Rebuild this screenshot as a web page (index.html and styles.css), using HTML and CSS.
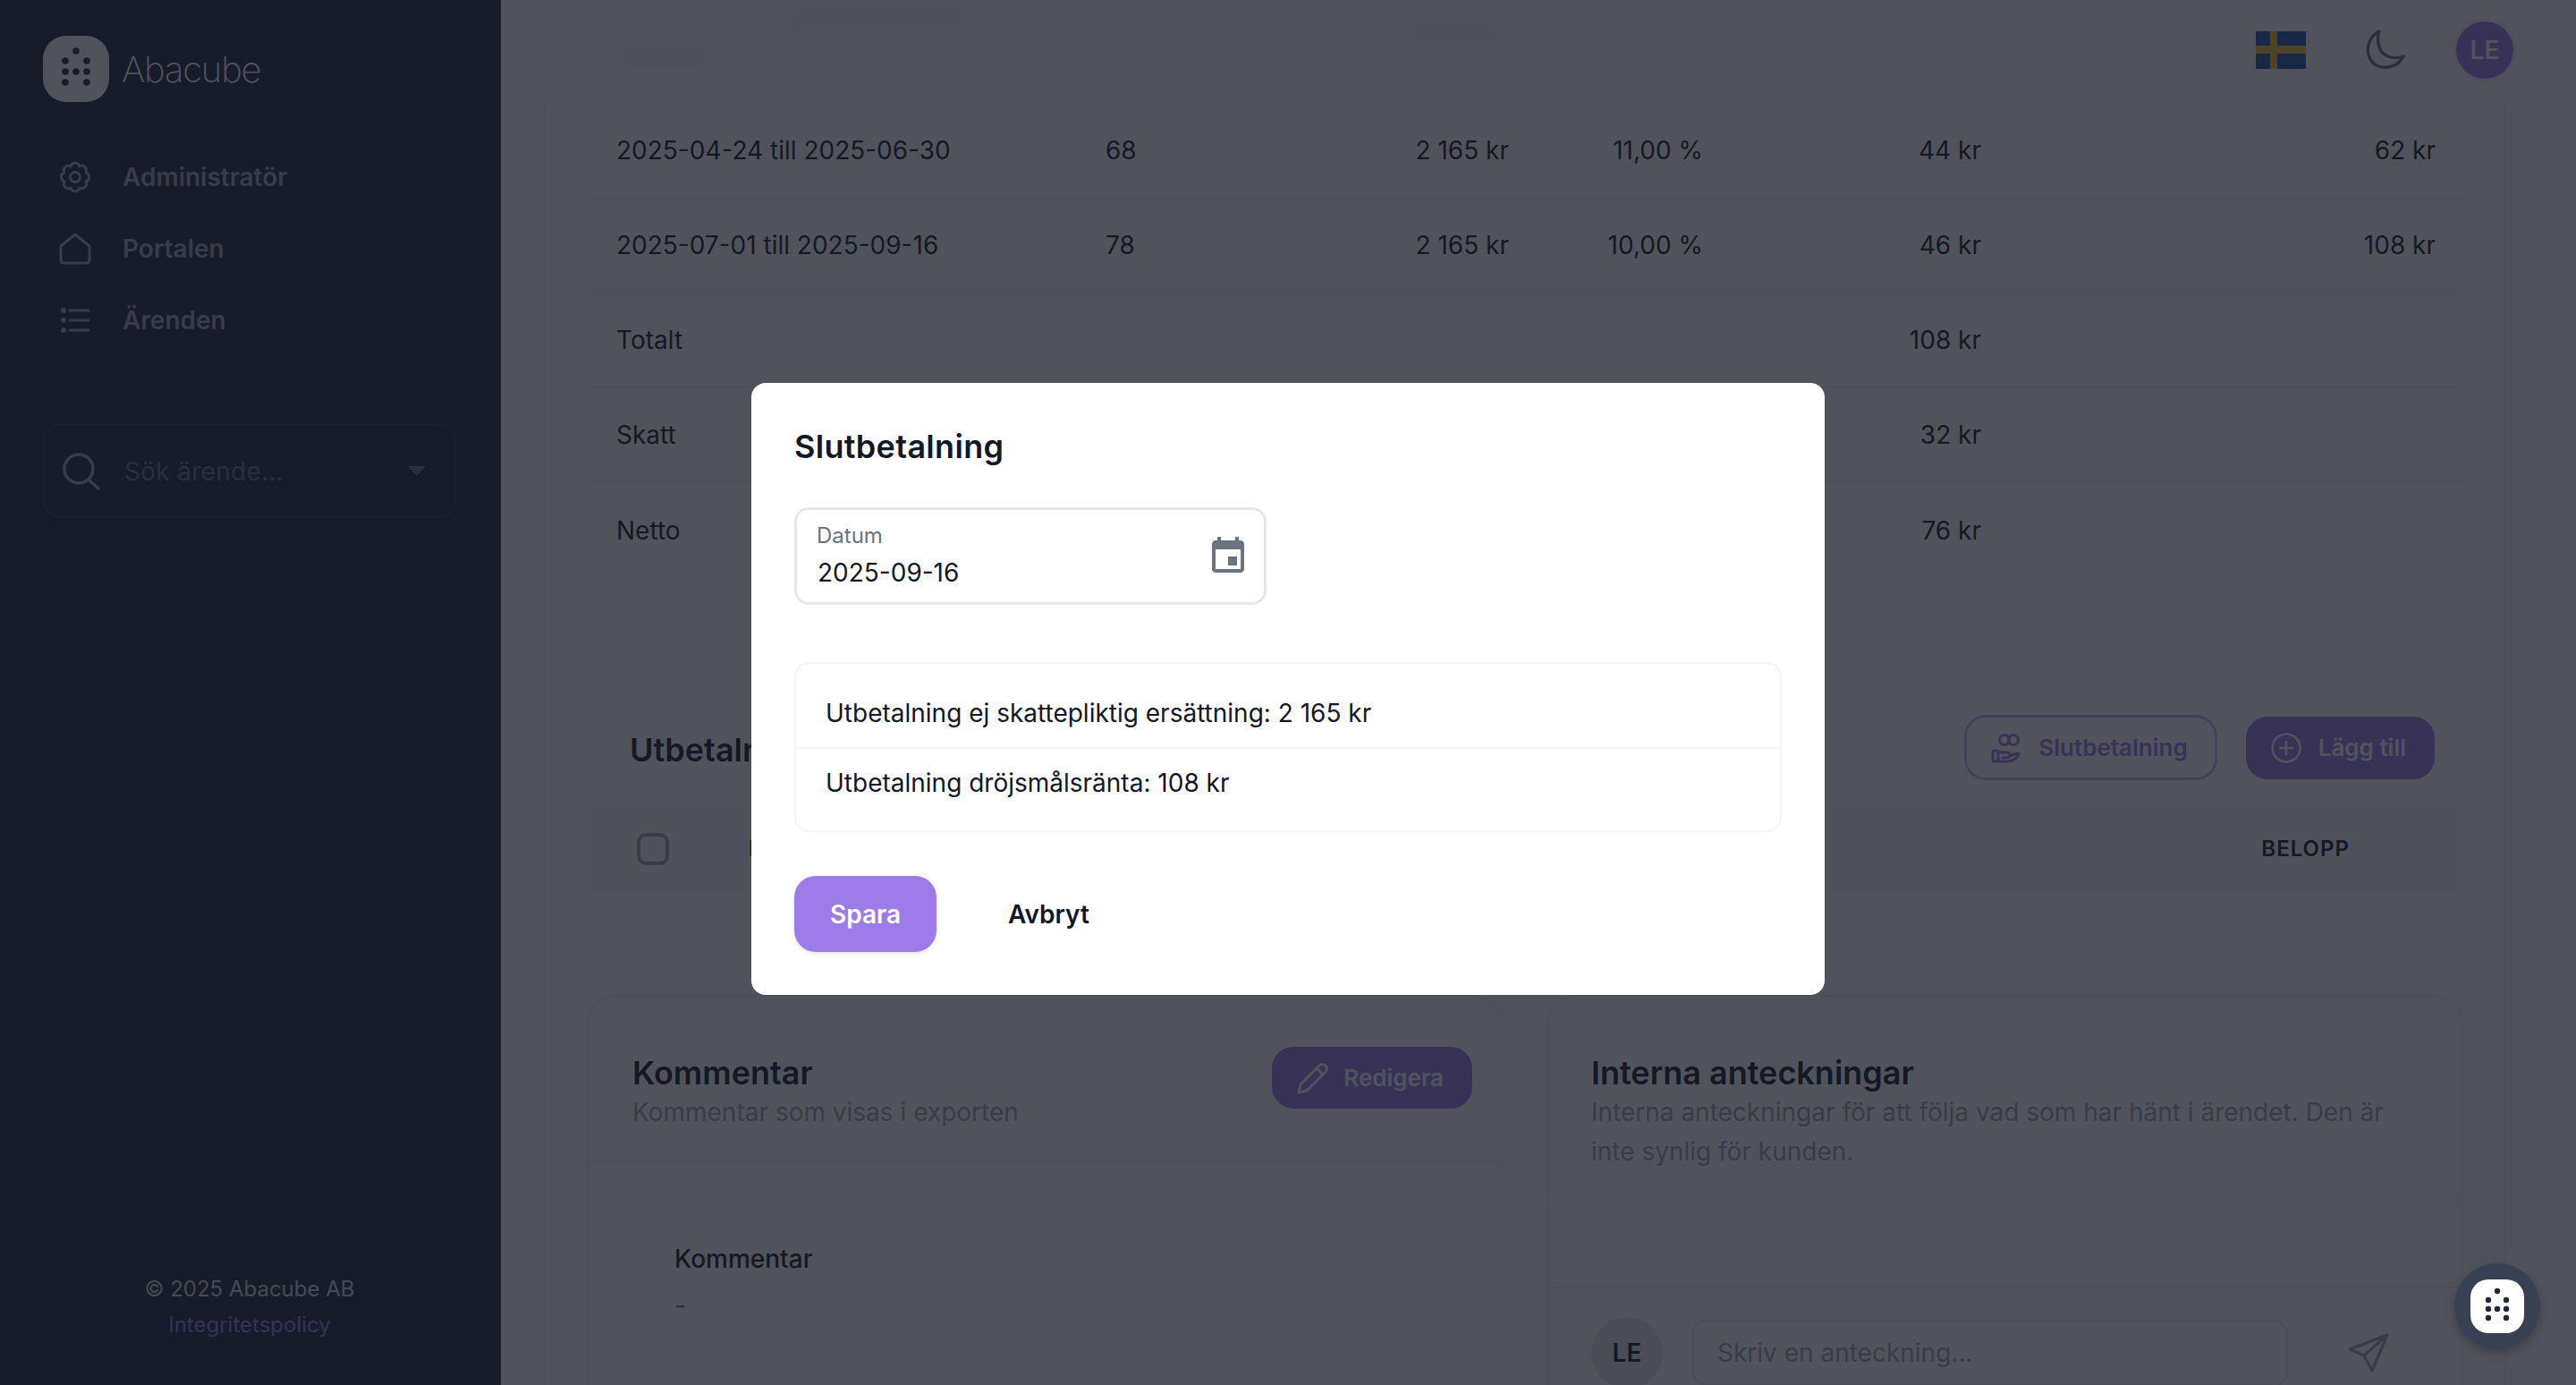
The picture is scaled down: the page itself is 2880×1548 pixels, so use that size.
FILE: index.html
```html
<!DOCTYPE html>
<html lang="sv">
<head>
    <meta charset="UTF-8">
    <meta name="viewport" content="width=device-width, initial-scale=1.0">
    <title>Abacube</title>
    <link rel="stylesheet" href="styles.css">
</head>
<body>
<div class="app">
    <!-- Sidebar -->
    <aside class="sidebar">
        <div class="brand">
            <div class="brand-logo">
                <svg width="74" height="74" viewBox="0 0 74 74">
                    <g fill="#1f2937">
                        <circle cx="37" cy="17" r="3.8"/>
                        <circle cx="25" cy="28" r="3.8"/><circle cx="49" cy="28" r="3.8"/>
                        <circle cx="25" cy="40" r="3.8"/><circle cx="37" cy="40" r="3.8"/><circle cx="49" cy="40" r="3.8"/>
                        <circle cx="25" cy="52" r="3.8"/><circle cx="49" cy="52" r="3.8"/>
                    </g>
                </svg>
            </div>
            <span class="brand-name">Abacube</span>
        </div>

        <nav class="nav">
            <a class="nav-item">
                <svg class="nav-icon" viewBox="0 0 36 36" fill="none" stroke="currentColor" stroke-width="3" stroke-linejoin="round">
                    <path d="M30.01 13.02A5.2 5.2 0 0 1 30.01 22.98A5.2 5.2 0 0 1 22.98 30.01A5.2 5.2 0 0 1 13.02 30.01A5.2 5.2 0 0 1 5.99 22.98A5.2 5.2 0 0 1 5.99 13.02A5.2 5.2 0 0 1 13.02 5.99A5.2 5.2 0 0 1 22.98 5.99A5.2 5.2 0 0 1 30.01 13.02Z"/>
                    <circle cx="18" cy="18" r="5.5"/>
                </svg>
                <span>Administratör</span>
            </a>
            <a class="nav-item">
                <svg class="nav-icon" viewBox="0 0 36 36" fill="none" stroke="currentColor" stroke-width="3" stroke-linejoin="round">
                    <path d="M2 15 18 2l16 13v16a3 3 0 0 1-3 3H5a3 3 0 0 1-3-3Z"/>
                </svg>
                <span>Portalen</span>
            </a>
            <a class="nav-item">
                <svg class="nav-icon" viewBox="0 0 36 36" fill="none" stroke="currentColor" stroke-width="3" stroke-linecap="round">
                    <path d="M12 7h21M12 18h21M12 29h21"/>
                    <g fill="currentColor" stroke="none"><circle cx="5" cy="7" r="3"/><circle cx="5" cy="18" r="3"/><circle cx="5" cy="29" r="3"/></g>
                </svg>
                <span>Ärenden</span>
            </a>
        </nav>

        <div class="search">
            <svg class="search-icon" viewBox="0 0 42 42" fill="none" stroke="currentColor" stroke-width="3.5" stroke-linecap="round">
                <circle cx="18" cy="18" r="16"/><path d="m30 31 10 9"/>
            </svg>
            <span class="search-text">Sök ärende...</span>
            <span class="search-caret"></span>
        </div>

        <div class="sidebar-footer">
            <div>© 2025 Abacube AB</div>
            <a class="policy-link">Integritetspolicy</a>
        </div>
    </aside>

    <!-- Main content -->
    <main class="main">
        <header class="topbar">
            <span class="ghost g1"></span>
            <span class="ghost g2"></span>
            <span class="ghost g3"></span>
            <div class="topbar-actions">
                <div class="flag"><span class="flag-v"></span><span class="flag-h"></span></div>
                <svg class="moon" viewBox="0 0 46 46" fill="none" stroke="currentColor" stroke-width="3.4" stroke-linejoin="round">
                    <path d="M17 2C5 8 0 24 9 36c8 10 28 8 35-6-12 4-22 0-26-8-3-7-3-14-1-20Z"/>
                </svg>
                <div class="avatar">LE</div>
            </div>
        </header>

        <div class="page">
            <div class="calc-table">
                <div class="calc-row">
                    <span>2025-04-24 till 2025-06-30</span><span>68</span><span class="num">2 165 kr</span><span class="num">11,00 %</span><span class="num">44 kr</span><span class="num">62 kr</span>
                </div>
                <div class="calc-row">
                    <span>2025-07-01 till 2025-09-16</span><span>78</span><span class="num">2 165 kr</span><span class="num">10,00 %</span><span class="num">46 kr</span><span class="num">108 kr</span>
                </div>
                <div class="calc-row"><span>Totalt</span><span class="num col5">108 kr</span></div>
                <div class="calc-row"><span>Skatt</span><span class="num col5">32 kr</span></div>
                <div class="calc-row last"><span>Netto</span><span class="num col5">76 kr</span></div>
            </div>

            <div class="section-head">
                <h2 class="section-title">Utbetalningar</h2>
                <div class="section-actions">
                    <div class="btn btn-outline">
                        <svg class="btn-icon" viewBox="0 0 36 36" fill="none" stroke="currentColor" stroke-width="3" stroke-linecap="round" stroke-linejoin="round">
                            <circle cx="16" cy="9" r="5.5"/>
                            <circle cx="26" cy="9" r="5.5"/>
                            <rect x="3" y="21" width="6" height="12" rx="1.5"/>
                            <path d="M9 23h9c3 0 4 1 4 3s-2 3-4 3h-4m8-2 8-3c2 0 2 2 1 3-3 4-7 6-12 6H9"/>
                        </svg>
                        <span>Slutbetalning</span>
                    </div>
                    <div class="btn btn-primary">
                        <svg class="btn-icon" viewBox="0 0 36 36" fill="none" stroke="currentColor" stroke-width="2.6" stroke-linecap="round">
                            <circle cx="18" cy="18" r="15.5"/><path d="M18 11v14M11 18h14"/>
                        </svg>
                        <span>Lägg till</span>
                    </div>
                </div>
            </div>

            <div class="pay-head">
                <span class="checkbox"></span>
                <span class="pay-col">DATUM</span>
                <span class="pay-amount">BELOPP</span>
            </div>

            <div class="cards">
                <section class="card">
                    <div class="card-head comment-head">
                        <div>
                            <h3 class="card-title">Kommentar</h3>
                            <p class="card-sub">Kommentar som visas i exporten</p>
                        </div>
                        <div class="btn btn-primary btn-edit">
                            <svg class="edit-icon" viewBox="0 0 36 36" fill="none" stroke="currentColor" stroke-width="3" stroke-linejoin="round">
                                <path d="M2 34l2-9L25 4a4 4 0 0 1 7 7L11 32Z"/><path d="M22 7l7 7"/>
                            </svg>
                            <span>Redigera</span>
                        </div>
                    </div>
                    <div class="comment-body">
                        <div class="comment-label">Kommentar</div>
                        <div class="comment-value">-</div>
                    </div>
                </section>

                <section class="card">
                    <div class="card-head notes-head">
                        <h3 class="card-title">Interna anteckningar</h3>
                        <p class="card-sub">Interna anteckningar för att följa vad som har hänt i ärendet. Den är inte synlig för kunden.</p>
                    </div>
                    <div class="notes-list"></div>
                    <div class="note-form">
                        <div class="note-avatar">LE</div>
                        <div class="note-input">Skriv en anteckning...</div>
                        <svg class="send-icon" viewBox="0 0 46 44" fill="none" stroke="currentColor" stroke-width="3.2" stroke-linejoin="round">
                            <path d="M44 2 2 18l16 7 9 17ZM18 25 44 2"/>
                        </svg>
                    </div>
                </section>
            </div>
        </div>
    </main>
</div>

<!-- Dialog -->
<div class="overlay">
    <div class="modal">
        <h2 class="modal-title">Slutbetalning</h2>
        <div class="date-field">
            <div>
                <div class="date-label">Datum</div>
                <div class="date-value">2025-09-16</div>
            </div>
            <svg class="date-icon" viewBox="0 0 24 24" fill="#6b7280">
                <path d="M17 12h-5v5h5v-5zM16 1v2H8V1H6v2H5c-1.11 0-1.99.9-1.99 2L3 19c0 1.1.89 2 2 2h14c1.1 0 2-.9 2-2V5c0-1.1-.9-2-2-2h-1V1h-2zm3 18H5V8h14v11z"/>
            </svg>
        </div>
        <ul class="payout-list">
            <li>Utbetalning ej skattepliktig ersättning: 2 165 kr</li>
            <li>Utbetalning dröjsmålsränta: 108 kr</li>
        </ul>
        <div class="modal-actions">
            <div class="modal-save">Spara</div>
            <div class="modal-cancel">Avbryt</div>
        </div>
    </div>
</div>

<!-- Chat widget -->
<div class="widget">
    <div class="widget-inner">
        <svg width="60" height="60" viewBox="0 0 60 60">
            <g fill="#1f2937">
                <circle cx="30" cy="13" r="3.2"/>
                <circle cx="20" cy="23" r="3.2"/><circle cx="40" cy="23" r="3.2"/>
                <circle cx="20" cy="33" r="3.2"/><circle cx="30" cy="33" r="3.2"/><circle cx="40" cy="33" r="3.2"/>
                <circle cx="20" cy="43" r="3.2"/><circle cx="40" cy="43" r="3.2"/>
            </g>
        </svg>
    </div>
</div>
</body>
</html>
```

FILE: styles.css
```css
/* Base */
* {
    box-sizing: border-box;
}
html, body {
    margin: 0;
    height: 100%;
    overflow: hidden;
}
body {
    font-family: Inter, "Liberation Sans", sans-serif;
    font-size: 28px;
    color: #111827;
    background-color: #fff;
}
.app {
    display: flex;
    height: 1548px;
}

/* Sidebar */
.sidebar {
    width: 560px;
    flex-shrink: 0;
    display: flex;
    flex-direction: column;
    padding: 40px 50px 0 48px;
    background-color: #1b2537;
    color: #9ca3af;
}
.brand {
    display: flex;
    align-items: center;
    gap: 14px;
    height: 74px;
}
.brand-logo {
    width: 74px;
    height: 74px;
    background-color: #fff;
    border-radius: 26px;
}
.brand-name {
    color: #fff;
    font-size: 40px;
    font-weight: 200;
    letter-spacing: -1.2px;
}
.nav {
    display: flex;
    flex-direction: column;
    gap: 20px;
    margin-top: 54px;
}
.nav-item {
    display: flex;
    align-items: center;
    gap: 35px;
    height: 60px;
    padding-left: 18px;
    font-size: 28px;
    font-weight: 600;
}
.nav-icon {
    width: 36px;
    height: 36px;
    flex-shrink: 0;
}
.search {
    display: flex;
    align-items: center;
    height: 105px;
    margin-top: 86px;
    padding: 0 32px 0 20px;
    border: 2px solid #2b3546;
    border-radius: 20px;
}
.search-icon {
    width: 42px;
    height: 42px;
    flex-shrink: 0;
}
.search-text {
    flex: 1;
    margin-left: 27px;
    font-size: 28px;
    letter-spacing: 0.3px;
    color: #6b7280;
}
.search-caret {
    width: 0;
    height: 0;
    border-left: 10px solid transparent;
    border-right: 10px solid transparent;
    border-top: 11px solid #6b7280;
}
.sidebar-footer {
    margin-top: auto;
    padding-bottom: 47px;
    text-align: center;
    font-size: 24px;
    line-height: 40px;
    color: #d1d5db;
}
.policy-link {
    color: #9d7be8;
}

/* Main */
.main {
    flex: 1;
    min-width: 0;
    height: 1548px;
    overflow: hidden;
}
.topbar {
    position: relative;
    display: flex;
    justify-content: flex-end;
    height: 116px;
    padding: 24px 70px 0 0;
}
/* blurred page title scrolled under the top bar */
.ghost {
    position: absolute;
    height: 24px;
    background-color: #f9fafb;
    filter: blur(6px);
}
.g1 {
    left: 322px;
    top: 10px;
    width: 200px;
}
.g2 {
    left: 138px;
    top: 52px;
    width: 92px;
}
.g3 {
    left: 1020px;
    top: 26px;
    width: 90px;
}
.topbar-actions {
    display: flex;
    align-items: center;
    height: 64px;
}
.flag {
    position: relative;
    width: 56px;
    height: 42px;
    background-color: #1e5aa8;
}
.flag-v {
    position: absolute;
    left: 16px;
    top: 0;
    width: 8px;
    height: 100%;
    background-color: #f7c325;
}
.flag-h {
    position: absolute;
    left: 0;
    top: 16px;
    width: 100%;
    height: 9px;
    background-color: #f7c325;
}
.moon {
    width: 46px;
    height: 46px;
    margin-left: 65px;
    color: #6b7280;
}
.avatar {
    display: flex;
    align-items: center;
    justify-content: center;
    width: 64px;
    height: 64px;
    margin-left: 57px;
    border-radius: 50%;
    background-color: #9d7be8;
    color: #fff;
    font-size: 28px;
    font-weight: 600;
    box-shadow: 0 0 0 4px #f3f4f6;
}

/* Page */
.page {
    margin: 0 78px 0 48px;
    padding: 0 47px 0 46px;
    height: 1432px;
    border-left: 2px solid #f3f4f6;
    border-right: 2px solid #f3f4f6;
}
.calc-row {
    display: grid;
    grid-template-columns: 547px 166px 285px 217px 311px 508px;
    align-items: center;
    height: 106px;
    padding-left: 33px;
    border-bottom: 2px solid #f3f4f6;
}
.calc-row.last {
    border-bottom: none;
}
.num {
    text-align: right;
}
.col5 {
    grid-column: 5;
}
.section-head {
    display: flex;
    align-items: center;
    justify-content: space-between;
    height: 73px;
    margin-top: 153px;
    padding: 4px 31px 0 48px;
}
.section-title {
    margin: 0;
    font-size: 36px;
    font-weight: 600;
}
.section-actions {
    display: flex;
    align-items: center;
    gap: 32px;
    margin-top: -4px;
}
.btn {
    display: flex;
    align-items: center;
    gap: 18px;
    font-size: 26px;
    font-weight: 600;
}
.btn-icon {
    width: 36px;
    height: 36px;
    flex-shrink: 0;
}
.btn-outline {
    height: 73px;
    padding: 0 30px 0 26px;
    border: 3px solid #c8b9f5;
    border-radius: 24px;
    color: #9d7be8;
}
.btn-primary {
    height: 70px;
    padding: 0 32px 0 27px;
    border-radius: 24px;
    background-color: #9d7be8;
    color: #fff;
}
.pay-head {
    display: flex;
    align-items: center;
    height: 101px;
    margin-top: 25px;
    padding: 2px 126px 0 56px;
    background-color: #f9fafb;
    font-size: 24px;
    font-weight: 600;
    letter-spacing: 1px;
}
.checkbox {
    width: 36px;
    height: 36px;
    border: 4px solid #9ca3af;
    border-radius: 10px;
}
.pay-col {
    margin-left: 89px;
}
.pay-amount {
    margin-left: auto;
}
.cards {
    display: grid;
    grid-template-columns: 1024px 1024px;
    gap: 50px;
    margin-top: 114px;
}
.card {
    height: 600px;
    border: 2px solid #f3f4f6;
    border-radius: 32px;
}
.card-head {
    padding: 63px 32px 0 49px;
    border-bottom: 2px solid #f3f4f6;
}
.comment-head {
    display: flex;
    justify-content: space-between;
    align-items: flex-start;
    height: 184px;
    padding-top: 56px;
}
.comment-head > div:first-child {
    padding-top: 7px;
}
.notes-head {
    height: 228px;
    padding: 63px 48px 0 47px;
}
.card-title {
    margin: 0;
    font-size: 36px;
    font-weight: 600;
    line-height: 44px;
}
.card-sub {
    margin: 0;
    line-height: 44px;
    color: #9ca3af;
}
.btn-edit {
    gap: 16px;
    height: 69px;
    padding: 0 32px 0 28px;
}
.edit-icon {
    width: 36px;
    height: 36px;
}
.comment-body {
    padding: 87px 0 0 96px;
}
.comment-label {
    font-weight: 500;
    line-height: 44px;
}
.comment-value {
    margin-top: 8px;
    color: #6b7280;
    line-height: 44px;
}
.notes-list {
    height: 98px;
    border-bottom: 2px solid #f3f4f6;
}
.note-form {
    display: flex;
    align-items: center;
    padding: 32px 0 0 47px;
}
.note-avatar {
    display: flex;
    align-items: center;
    justify-content: center;
    width: 80px;
    height: 80px;
    flex-shrink: 0;
    border-radius: 50%;
    background-color: #e5e7eb;
    font-weight: 600;
}
.note-input {
    display: flex;
    align-items: center;
    width: 666px;
    height: 74px;
    margin-left: 33px;
    padding-left: 26px;
    border: 2px solid #e5e7eb;
    border-radius: 16px;
    color: #9ca3af;
}
.send-icon {
    width: 46px;
    height: 44px;
    margin-left: 67px;
    color: #9ca3af;
}

/* Dialog */
.overlay {
    position: fixed;
    inset: 0;
    z-index: 10;
    display: flex;
    align-items: center;
    justify-content: center;
    padding-bottom: 8px;
    background-color: rgba(21, 26, 38, 0.75);
}
.modal {
    width: 1200px;
    height: 684px;
    padding: 48px;
    background-color: #fff;
    border-radius: 16px;
}
.modal-title {
    margin: 0;
    font-size: 36px;
    font-weight: 600;
    letter-spacing: 0.3px;
    line-height: 46px;
}
.date-field {
    display: flex;
    align-items: center;
    justify-content: space-between;
    width: 528px;
    height: 109px;
    margin-top: 45px;
    padding: 0 16px 0 22px;
    border: 3px solid #e5e7eb;
    border-radius: 16px;
}
.date-label {
    font-size: 24px;
    line-height: 32px;
    color: #6b7280;
}
.date-value {
    margin-top: 5px;
    padding-left: 1px;
    line-height: 40px;
}
.date-icon {
    width: 48px;
    height: 48px;
}
.payout-list {
    margin: 64px 0 0;
    padding: 16px 0;
    list-style: none;
    border: 2px solid #f3f4f6;
    border-radius: 16px;
}
.payout-list li {
    display: flex;
    align-items: center;
    height: 77px;
    padding-left: 33px;
}
.payout-list li + li {
    border-top: 2px solid #f3f4f6;
}
.modal-actions {
    display: flex;
    align-items: center;
    gap: 80px;
    margin-top: 49px;
}
.modal-save {
    display: flex;
    align-items: center;
    justify-content: center;
    width: 159px;
    height: 85px;
    border-radius: 24px;
    background-color: #9d7be8;
    color: #fff;
    font-weight: 600;
    box-shadow: 0 2px 6px rgba(0, 0, 0, 0.1);
}
.modal-cancel {
    font-weight: 600;
}

/* Chat widget */
.widget {
    position: fixed;
    right: 40px;
    bottom: 40px;
    z-index: 20;
    display: flex;
    align-items: center;
    justify-content: center;
    width: 96px;
    height: 96px;
    border-radius: 50%;
    background-color: #374151;
    box-shadow: 0 4px 12px rgba(0, 0, 0, 0.25);
}
.widget-inner {
    width: 60px;
    height: 60px;
    border-radius: 20px;
    background-color: #fff;
}
```
